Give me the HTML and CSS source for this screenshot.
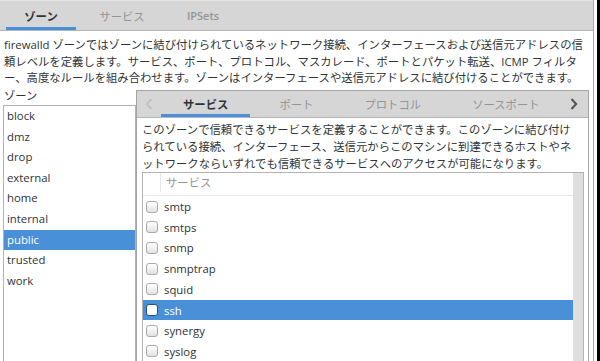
FILE: index.html
```html
<!DOCTYPE html>
<html lang="ja">
<head>
  <meta charset="UTF-8" />
  <title>firewall-config</title>
  <link rel="stylesheet" href="styles.css">
</head>
<body>
  <div class="screen">
    <div class="window">
      <div class="topbar">
        <div class="top-tab active">ゾーン</div>
        <div class="top-tab">サービス</div>
        <div class="top-tab latin">IPSets</div>
      </div>
      <p class="intro">firewalld ゾーンではゾーンに結び付けられているネットワーク接続、インターフェースおよび送信元アドレスの信頼レベルを定義します。サービス、ポート、プロトコル、マスカレード、ポートとパケット転送、ICMP フィルター、高度なルールを組み合わせます。ゾーンはインターフェースや送信元アドレスに結び付けることができます。</p>
      <div class="main">
        <div class="zones">
          <div class="zones-label">ゾーン</div>
          <ul class="zone-list">
            <li>block</li>
            <li>dmz</li>
            <li>drop</li>
            <li>external</li>
            <li>home</li>
            <li>internal</li>
            <li class="selected">public</li>
            <li>trusted</li>
            <li>work</li>
          </ul>
        </div>
        <div class="notebook">
          <div class="nb-tabs">
            <span class="nb-arrow left">
              <svg width="8" height="12" viewBox="0 0 8 12"><path d="M6.5 1 L1.8 6 L6.5 11" fill="none" stroke="#bfc0c0" stroke-width="2"/></svg>
            </span>
            <div class="nb-strip">
              <div class="nb-tab active">サービス</div>
              <div class="nb-tab">ポート</div>
              <div class="nb-tab">プロトコル</div>
              <div class="nb-tab">ソースポート</div>
            </div>
            <span class="nb-arrow right">
              <svg width="8" height="12" viewBox="0 0 8 12"><path d="M1.5 1 L6.2 6 L1.5 11" fill="none" stroke="#505555" stroke-width="2"/></svg>
            </span>
          </div>
          <div class="nb-page">
            <p class="nb-desc">このゾーンで信頼できるサービスを定義することができます。このゾーンに結び付けられている接続、インターフェース、送信元からこのマシンに到達できるホストやネットワークならいずれでも信頼できるサービスへのアクセスが可能になります。</p>
            <div class="svc-frame">
              <div class="svc-table">
                <div class="svc-head">
                  <span class="svc-check-col"></span>
                  <span class="svc-title">サービス</span>
                </div>
                <div class="svc-row"><span class="check"></span>smtp</div>
                <div class="svc-row"><span class="check"></span>smtps</div>
                <div class="svc-row"><span class="check"></span>snmp</div>
                <div class="svc-row"><span class="check"></span>snmptrap</div>
                <div class="svc-row"><span class="check"></span>squid</div>
                <div class="svc-row selected"><span class="check"></span>ssh</div>
                <div class="svc-row"><span class="check"></span>synergy</div>
                <div class="svc-row"><span class="check"></span>syslog</div>
              </div>
              <div class="scrollbar"></div>
            </div>
          </div>
        </div>
      </div>
    </div>
    <div class="edge"></div>
  </div>
</body>
</html>
```

FILE: styles.css
```css
html, body {
  margin: 0;
  padding: 0;
  width: 600px;
  height: 361px;
  overflow: hidden;
  background-color: #ffffff;
  color: #2e3436;
  font-family: 'Open Sans', 'Noto Sans CJK JP', sans-serif;
  font-size: 11.35px;
}

.screen {
  display: flex;
  height: 361px;
}

.window {
  width: 593px;
  border-right: 1px solid #a9a9a9;
  display: flex;
  flex-direction: column;
  background: #ffffff;
}

.edge {
  flex: 1;
  background: linear-gradient(to right, #ffffff 0 3px, #000000 3px);
}

/* top switcher */
.topbar {
  height: 29px;
  display: flex;
  gap: 11px;
  padding-left: 6px;
  background-color: #d6d6d6;
  border-top: 1px solid #e4e4e4;
  border-bottom: 1px solid #b4b4b4;
}

.top-tab {
  width: 70px;
  display: flex;
  align-items: center;
  justify-content: center;
  color: #929595;
}

.top-tab.active {
  color: #2e3436;
  font-weight: bold;
  box-shadow: inset 0 -3px 0 #4a90d9;
}

.top-tab.latin {
  font-size: 11px;
  font-weight: 600;
}

.intro {
  margin: 0;
  padding: 6px 3px 0 4px;
  line-height: 16.7px;
}

.main {
  display: flex;
  flex: 1;
  min-height: 0;
}

/* zone column */
.zones {
  width: 133px;
  margin-left: 3px;
  display: flex;
  flex-direction: column;
}

.zones-label {
  line-height: 16px;
  padding: 1px 0 0 1px;
  margin-bottom: 1px;
}

.zone-list {
  flex: 1;
  margin: 0;
  padding: 0;
  list-style: none;
  border: 1px solid #b3b3b3;
  border-bottom: none;
}

.zone-list li {
  height: 20.6px;
  line-height: 20.6px;
  padding-left: 3px;
}

.zone-list li.selected {
  background-color: #4a90d9;
  color: #ffffff;
}

/* notebook */
.notebook {
  width: 451px;
  margin: 3px 4px 0 0;
  border: 1px solid #a4a4a4;
  border-bottom: none;
  display: flex;
  flex-direction: column;
}

.nb-tabs {
  height: 26px;
  display: flex;
  background-color: #d6d6d6;
  border-bottom: 1px solid #b4b4b4;
}

.nb-arrow {
  flex: none;
  display: flex;
  align-items: center;
  justify-content: center;
}

.nb-arrow.left {
  width: 24px;
}

.nb-arrow.right {
  width: 28px;
}

.nb-strip {
  flex: 1;
  display: flex;
  gap: 7px;
  overflow: hidden;
}

.nb-tab {
  flex: none;
  padding: 0 22px;
  display: flex;
  align-items: center;
  color: #929595;
}

.nb-tab.active {
  color: #2e3436;
  font-weight: bold;
  box-shadow: inset 0 -3px 0 #4a90d9;
}

.nb-page {
  flex: 1;
  display: flex;
  flex-direction: column;
  padding: 4px 4px 0 5px;
  min-height: 0;
}

.nb-desc {
  margin: 0 6px 0 0;
  line-height: 16.7px;
}

/* services list */
.svc-frame {
  flex: 1;
  display: flex;
  border: 1px solid #b3b3b3;
  border-bottom: none;
}

.svc-table {
  flex: 1;
}

.svc-head {
  height: 22px;
  display: flex;
  border-bottom: 1px solid #e8e8e8;
  color: #929595;
}

.svc-check-col {
  width: 17px;
  height: 19px;
  border-right: 1px solid #e6e6e6;
}

.svc-title {
  padding-left: 5px;
  line-height: 20px;
}

.svc-row {
  height: 20.7px;
  display: flex;
  align-items: center;
  gap: 6px;
  padding-left: 3px;
}

.svc-row.selected {
  background-color: #4a90d9;
  color: #ffffff;
}

.check {
  width: 12px;
  height: 12px;
  box-sizing: border-box;
  border: 1px solid #a9a9a9;
  border-radius: 3px;
  background: linear-gradient(#ffffff, #e2e2e2);
}

.svc-row.selected .check {
  border-color: #2b4f78;
  background: #ffffff;
}

.scrollbar {
  width: 10px;
  background-color: #dfdfdf;
}
```
